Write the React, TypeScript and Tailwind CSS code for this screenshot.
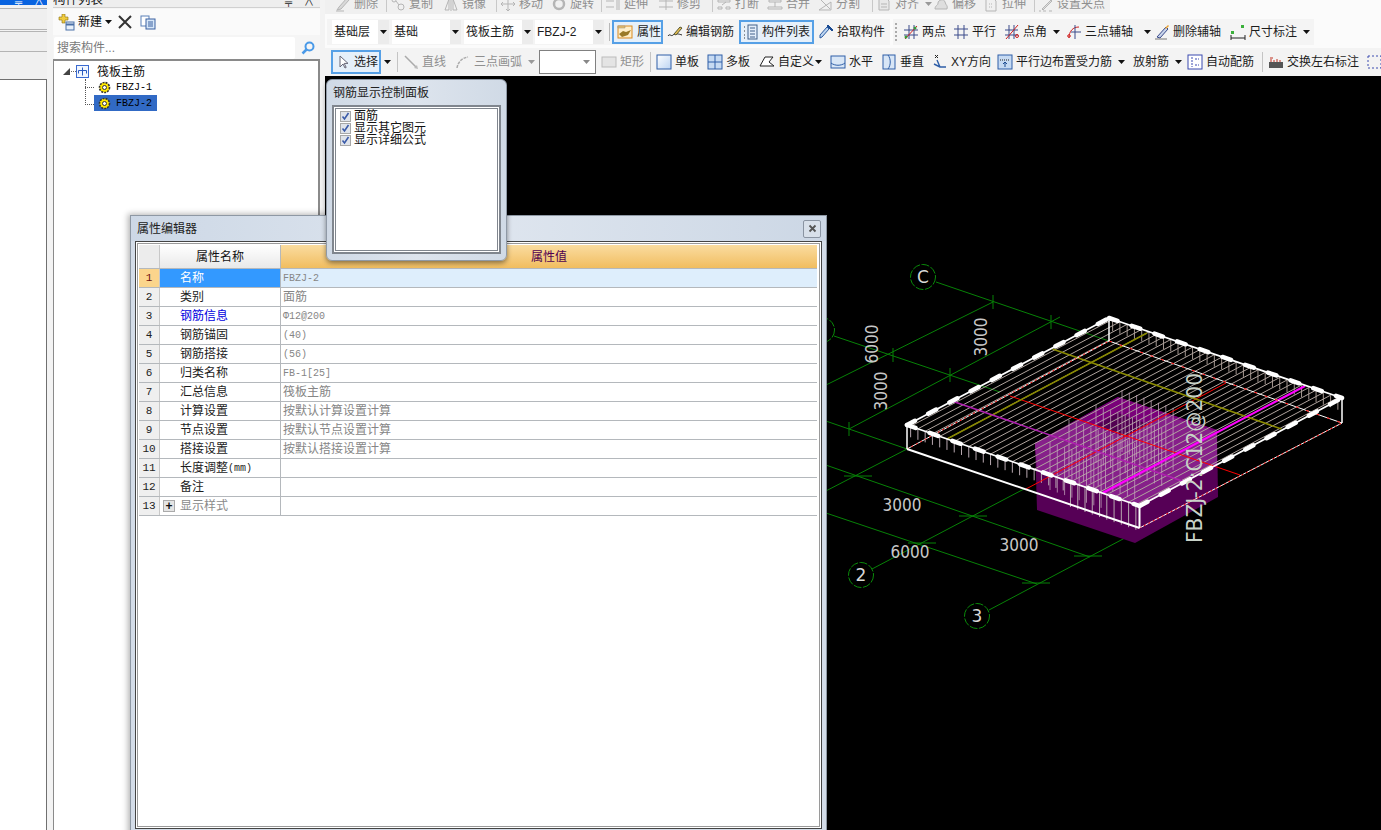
import React from "react";

const I = ({ children, s = 16 }: { children?: React.ReactNode; s?: number }) => (
  <svg width={s} height={s} viewBox="0 0 16 16" fill="none" className="shrink-0">{children}</svg>
);
const Arrow = ({ c = "#111" }: { c?: string }) => (
  <svg width="7" height="4" viewBox="0 0 7 4" className="shrink-0"><path d="M0 0h7L3.5 4z" fill={c} /></svg>
);
const G = "#b5b5b5";
const icons: Record<string, React.ReactNode> = {
  del: <><path d="M2 14l4-1 8-9-2-2-8 9z" fill="#d8d8d8" stroke={G} /><path d="M1 15h8" stroke={G} /></>,
  copy: <><circle cx="4" cy="4" r="2" stroke={G} /><circle cx="11" cy="11" r="3" stroke={G} /><path d="M6 5l3 4" stroke={G} /></>,
  mirror: <><path d="M2 14L6 3v11zM14 14L10 3v11z" stroke={G} /><path d="M8 1v14" stroke={G} /></>,
  move: <path d="M8 1v14M1 8h14M8 1l-2 2M8 1l2 2M8 15l-2-2M8 15l2-2M1 8l2-2M1 8l2 2M15 8l-2-2M15 8l-2 2" stroke={G} />,
  rotate: <><circle cx="8" cy="8" r="5" stroke={G} strokeWidth="2.5" /></>,
  extend: <path d="M1 5h8M1 11h8M12 2v12M14 2v12" stroke={G} />,
  trim: <path d="M1 5h14M1 11h14M8 2v12" stroke={G} />,
  brk: <path d="M2 4h12v2H2zM2 11h4v2H2zM10 11h4v2h-4zM6 9l4-3" stroke={G} />,
  merge: <path d="M2 4h12v2H2zM1 11h14v2H1zM8 6v5" stroke={G} />,
  split: <path d="M2 14h12V6L2 14zM4 4l9 9" stroke={G} />,
  align: <><path d="M3 2h7l3 3v9H3z" fill="#e8e8e8" stroke={G} /><path d="M5 8h6M5 11h6" stroke={G} /></>,
  offset: <path d="M2 13c0-4 3-3 3-6s6-5 7-1 3 3 2 7z" fill="#dedede" stroke={G} />,
  stretch: <><path d="M3 2h7l3 3v10H3z" stroke={G} /><path d="M6 8h4M6 11h4" stroke={G} strokeDasharray="1 1" /></>,
  grip: <><path d="M4 13L13 4l1 1-9 9z" fill="#ddd" stroke={G} /><path d="M1 15h2M5 15h3M11 15h3" stroke={G} /></>,
  prop: <><rect x="1" y="2" width="14" height="12" fill="#ffeec8" stroke="#d98a20" /><path d="M1 2h7v2H1z" fill="#f0c060" stroke="#888" strokeWidth=".5" /><path d="M2 10l4-3 3 1 5-2-3 5-6 2z" fill="#9a7a28" /></>,
  edit: <><path d="M1 12c2-3 3 1 5-1s6-1 9 0" stroke="#222" /><path d="M7 10l6-7 2 1-6 7z" fill="#e8c050" stroke="#553" /></>,
  list: <><path d="M1 3h2M1 7h2M1 11h2M1 14h2" stroke="#333" strokeDasharray="1 1" /><rect x="5" y="1" width="9" height="14" fill="#e4eefa" stroke="#40608a" /><path d="M7 4h5M7 7h5M7 10h5M7 13h5" stroke="#40608a" /></>,
  pick: <><path d="M2 14l2-1 7-8-2-2-7 8z" fill="#bcd4f0" stroke="#2a5aa0" /><path d="M9 2l1-1 5 5-1 1z" fill="#1a4a90" stroke="#1a4a90" /></>,
  two: <><path d="M1 6h14M1 11h14M6 1v14M11 1v14" stroke="#3a4a8a" /><path d="M2 15L14 2" stroke="#d02020" /><circle cx="3" cy="13" r="1.5" fill="#3a9a3a" /><circle cx="12" cy="4" r="1.5" fill="#3a9a3a" /></>,
  par: <path d="M1 5h14M1 11h14M5 1v14M11 1v14" stroke="#3a4a8a" />,
  angle: <><path d="M1 6h13M1 11h13M5 1v14M10 1v14" stroke="#3a4a8a" /><path d="M2 15L14 1" stroke="#d02020" /><circle cx="13" cy="12" r="1.5" stroke="#d02020" /></>,
  arc: <><path d="M3 14C3 7 7 3 13 3" stroke="#d02020" /><path d="M9 1v14M5 8h10" stroke="#3a4a8a" /><circle cx="3" cy="12" r="1.3" stroke="#d02020" /></>,
  eraser: <><path d="M3 13L12 3l2 2-8 9z" fill="#c8d4ea" stroke="#3a4a8a" /><path d="M1 15h12" stroke="#777" /><path d="M11 4l3-3 1 1-3 3z" fill="#e8a030" /></>,
  dim: <><path d="M1 14h14M1 11v5M15 11v5" stroke="#222" /><rect x="1" y="7" width="3" height="3" fill="#3ab03a" /><rect x="11" y="1" width="3" height="3" fill="#3ab03a" /></>,
  select: <path d="M4 2v11l3-3 2 4 1.2-.6-2-4H12z" fill="#fff" stroke="#667" />,
  line: <><path d="M2 2l11 11" stroke="#aaa" strokeWidth="1.5" /><path d="M15 15l-4-1 3-3z" fill="#bbb" /></>,
  arc3: <path d="M2 14C3 8 7 4 13 3" stroke="#aaa" strokeWidth="1.5" strokeDasharray="3 1" />,
  rect: <rect x="1" y="3" width="14" height="10" fill="#e4e4e4" stroke="#bbb" />,
  single: <rect x="1" y="1" width="14" height="14" fill="url(#bl)" stroke="#2f5fa8" />,
  multi: <><rect x="1" y="1" width="14" height="14" fill="#c6daf2" stroke="#2f5fa8" /><path d="M8 1v14M1 8h14" stroke="#2f5fa8" /></>,
  custom: <path d="M1 12L6 3h8l-4 5 5 4z" fill="#fff" stroke="#222" />,
  horiz: <><rect x="1" y="2" width="14" height="12" fill="#d8e6f6" stroke="#2f5fa8" /><path d="M1 9c4 3 10 3 14 0" stroke="#2f5fa8" /></>,
  vert: <><rect x="2" y="1" width="12" height="14" fill="#d8e6f6" stroke="#2f5fa8" /><path d="M7 1c3 4 3 10 0 14" stroke="#2f5fa8" /></>,
  xy: <><path d="M3 1l3 3M6 1L3 4" stroke="#222" /><path d="M5 6l3 7h6M8 13L2 10" stroke="#2f5fa8" strokeWidth="1.4" /></>,
  parbar: <><rect x="1" y="1" width="14" height="14" fill="#c6daf2" stroke="#2f5fa8" /><path d="M3 6h10" stroke="#222" strokeDasharray="1 1" /><path d="M8 13V8M6 10l2-2 2 2" stroke="#1a4a90" /></>,
  auto: <><rect x="1" y="1" width="14" height="14" fill="#fff" stroke="#3a4ab0" /><path d="M5 3v10M8 5h4M8 11h4" stroke="#3a4ab0" strokeDasharray="2 1" /></>,
  swap: <><rect x="1" y="8" width="14" height="6" fill="#555" /><path d="M3 8V5M6 8V6M9 8V5M12 8V6" stroke="#c03020" /><path d="M2 4h3" stroke="#c03020" /></>,
  dashbox: <rect x="1" y="2" width="13" height="12" stroke="#3a4ab0" strokeDasharray="2 2" />,
};

type It = { w: string; i?: string; t?: string; a?: boolean; gray?: boolean; ag?: string };
const Item = ({ w, i, t, a, gray, ag }: It) => (
  <div className={`flex items-center shrink-0 gap-[3px] h-[24px] ${w}`}>
    {i && <I>{icons[i]}</I>}
    {t && <span className={`whitespace-nowrap ${gray ? "text-[#8f8f8f]" : "text-[#1c1c1c]"}`}>{t}</span>}
    {a && <span className={ag ?? "ml-[3px]"}><Arrow c={gray ? "#999" : "#111"} /></span>}
  </div>
);
const Sep = ({ w }: { w: string }) => (
  <div className={`shrink-0 h-[20px] flex ${w}`}><div className="w-px h-full bg-[#c4c4c4]" /></div>
);

const row1: It[] = [
  { w: "w-[55px]", i: "del", t: "删除" }, { w: "w-[53px]", i: "copy", t: "复制" }, { w: "w-[57px]", i: "mirror", t: "镜像" },
  { w: "w-[51px]", i: "move", t: "移动" }, { w: "w-[54px]", i: "rotate", t: "旋转" }, { w: "w-[53px]", i: "extend", t: "延伸" },
  { w: "w-[58px]", i: "trim", t: "修剪" }, { w: "w-[51px]", i: "brk", t: "打断" }, { w: "w-[50px]", i: "merge", t: "合并" },
  { w: "w-[59px]", i: "split", t: "分割" }, { w: "w-[57px]", i: "align", t: "对齐", a: true }, { w: "w-[50px]", i: "offset", t: "偏移" },
  { w: "w-[55px]", i: "stretch", t: "拉伸" }, { w: "w-[76px]", i: "grip", t: "设置夹点" },
];
const row2b: It[] = [
  { w: "w-[50px]", i: "two", t: "两点" }, { w: "w-[51px]", i: "par", t: "平行" }, { w: "w-[62px]", i: "angle", t: "点角", a: true },
  { w: "w-[88px]", i: "arc", t: "三点辅轴", a: true, ag: "ml-[8px]" }, { w: "w-[76px]", i: "eraser", t: "删除辅轴" }, { w: "w-[86px]", i: "dim", t: "尺寸标注", a: true },
];
const row3: It[] = [
  { w: "w-[51px]", i: "single", t: "单板" }, { w: "w-[52px]", i: "multi", t: "多板" }, { w: "w-[71px]", i: "custom", t: "自定义", a: true, ag: "-ml-[2px]" },
  { w: "w-[51px]", i: "horiz", t: "水平" }, { w: "w-[51px]", i: "vert", t: "垂直" }, { w: "w-[65px]", i: "xy", t: "XY方向" },
  { w: "w-[136px]", i: "parbar", t: "平行边布置受力筋", a: true }, { w: "w-[54px]", t: "放射筋", a: true }, { w: "w-[75px]", i: "auto", t: "自动配筋" },
];

const Combo = ({ t, w, mr }: { t: string; w: string; mr: string }) => (
  <div className={`flex h-[24px] shrink-0 ${mr}`}>
    <div className={`bg-white pl-[2px] flex items-center ${w}`}>{t}</div>
    <div className="w-[11px] bg-[#ececec] flex items-center justify-center"><Arrow /></div>
  </div>
);

const rows: [string, string, string?, boolean?][] = [
  ["1", "名称", "FBZJ-2", true], ["2", "类别", "面筋"], ["3", "钢筋信息", "Φ12@200", true], ["4", "钢筋锚固", "(40)", true],
  ["5", "钢筋搭接", "(56)", true], ["6", "归类名称", "FB-1[25]", true], ["7", "汇总信息", "筏板主筋"], ["8", "计算设置", "按默认计算设置计算"],
  ["9", "节点设置", "按默认节点设置计算"], ["10", "搭接设置", "按默认搭接设置计算"], ["11", "长度调整", ""], ["12", "备注", ""], ["13", "显示样式", ""],
];

const Check = ({ t }: { t: string }) => (
  <div className="flex items-center h-[12px] gap-[3px]">
    <div className="w-[11px] h-[11px] shrink-0 border border-[#a8a8a8] bg-[#dfe3ea] flex items-center justify-center">
      <svg width="9" height="9" viewBox="0 0 9 9" fill="none"><path d="M1.5 4.5l2 2.5 4-6" stroke="#3a5aa8" strokeWidth="1.6" /></svg>
    </div>
    <span className="text-[#111] whitespace-nowrap leading-[12px]">{t}</span>
  </div>
);

const Gear = () => (
  <svg width="13" height="13" viewBox="0 0 13 13" className="shrink-0">
    <circle cx="6.5" cy="6.5" r="5" fill="#ffe800" stroke="#333" strokeDasharray="2 1" strokeWidth="1.6" />
    <circle cx="6.5" cy="6.5" r="2" fill="#fff" stroke="#333" />
  </svg>
);

const L = { x: 907, y: 425 }, B = { x: 1109, y: 318 }, R = { x: 1342, y: 398 }, F = { x: 1139.5, y: 506 };
const LB = { x: 907, y: 449 }, BB = { x: 1109, y: 341 }, RB = { x: 1342, y: 423 }, FB = { x: 1139.5, y: 528 };
type P = { x: number; y: number };
const Ln = ({ a, b, c, w = 1, d, cap }: { a: P; b: P; c: string; w?: number; d?: string; cap?: "round" }) => (
  <line x1={a.x} y1={a.y} x2={b.x} y2={b.y} stroke={c} strokeWidth={w} strokeDasharray={d} strokeLinecap={cap} />
);
const GL: [number, number, number, number][] = [
  [936, 282, 1109, 341], [834, 336, 1000, 392], [820, 419, 907, 449], [820, 463, 1090, 557], [820, 511, 1037, 584],
  [989, 610, 1140, 530], [872, 569, 1024, 489], [820, 494, 907, 449], [820, 388, 993, 302], [849, 429, 1060, 317],
];
const TK: [number, number][] = [[993, 302], [1051, 322], [893, 355], [950, 375], [849, 429], [858, 476], [973, 516], [1088, 556], [922, 543], [1036, 583]];
const Axis = ({ x, y, t }: { x: number; y: number; t: string }) => (
  <g>
    <circle cx={x} cy={y} r="12.5" fill="#000" stroke="#0a8a0a" strokeDasharray="8 1.5" />
    <text x={x} y={y + 6} textAnchor="middle" fontSize="17" fill="#d8d8d8" fontFamily="DejaVu Sans">{t}</text>
  </g>
);
const Num = ({ x, y, t, rot }: { x: number; y: number; t: string; rot?: boolean }) => (
  <text x={x} y={y} textAnchor="middle" fontSize="17" fill="#c8c8c8" fontFamily="DejaVu Sans" textLength={39} lengthAdjust="spacingAndGlyphs"
    transform={rot ? `rotate(-90 ${x} ${y})` : undefined}>{t}</text>
);

const Scene = () => {
  const N = 32;
  const mesh = Array.from({ length: N }, (_, i) => {
    const t = (i + 0.5) / N;
    const a = { x: L.x + (F.x - L.x) * t, y: L.y + (F.y - L.y) * t };
    const b = { x: a.x + (B.x - L.x), y: a.y + (B.y - L.y) };
    return { a, b };
  });
  const rowsV: [number, number, number, number][] = [
    [1122, 390, 8, 62], [1096, 405, 10, 58], [1069, 420, 10, 56], [1050, 442, 8, 48],
  ];
  return (
    <svg width="1056" height="754" viewBox="325 76 1056 754" className="block">
      <defs>
        <linearGradient id="bl" x1="0" y1="0" x2="1" y2="1"><stop offset="0" stopColor="#ffffff" /><stop offset="1" stopColor="#bcd4f2" /></linearGradient>
      </defs>
      {GL.map((g, i) => <line key={i} x1={g[0]} y1={g[1]} x2={g[2]} y2={g[3]} stroke="#078207" />)}
      {TK.map((k, i) => (
        <g key={i} stroke="#078207">
          <line x1={k[0] - 14} y1={k[1]} x2={k[0] + 14} y2={k[1]} opacity={i > 4 ? 1 : 0} />
          <line x1={k[0]} y1={k[1] - 7} x2={k[0]} y2={k[1] + 7} opacity={i <= 4 ? 1 : 0} />
        </g>
      ))}
      <Axis x={923} y={277} t="C" />
      <Axis x={861} y={575} t="2" />
      <Axis x={977} y={616} t="3" />
      <Axis x={822} y={330} t="" />
      <Num x={987} y={337} t="3000" rot />
      <Num x={878} y={344} t="6000" rot />
      <Num x={887} y={391} t="3000" rot />
      <Num x={902} y={511} t="3000" />
      <Num x={910} y={558} t="6000" />
      <Num x={1019} y={551} t="3000" />

      <polygon points="1035,443 1118,397 1217,430 1218,497 1135,543 1037,510" fill="#560056" />
      <polygon points="1035,443 1118,397 1217,430 1217,465 1139.5,506 1037,470" fill="#7a007a" />
      <polygon points="1035,443 1078,420 1125,437 1165,415 1217,432 1217,465 1139.5,506 1037,470" fill="#86208a" />
      <polygon points="1118,413 1097,425 1125,437 1148,424" fill="#520052" />

      {mesh.map((m, i) => (
        <g key={i}>
          <Ln a={m.a} b={m.b} c="#b0a49e" />
          <Ln a={m.b} b={{ x: m.b.x, y: m.b.y + 12 }} c="#a3968f" />
          <Ln a={m.a} b={{ x: m.a.x, y: m.a.y + 11 + (i > 21 && i < 32 ? 14 : 0) }} c="#b8a8b0" />
        </g>
      ))}
      {rowsV.map((r, ri) =>
        Array.from({ length: r[2] }, (_, i) => (
          <line key={`${ri}-${i}`} x1={r[0] + i * 7.3} y1={r[1] + i * 2.55} x2={r[0] + i * 7.3} y2={r[1] + i * 2.55 + r[3]} stroke="#c4a4bc" opacity="0.75" />
        ))
      )}

      <Ln a={{ x: 1010, y: 396 }} b={{ x: 1240, y: 475 }} c="#ff0000" />
      <Ln a={{ x: 1226, y: 383 }} b={{ x: 1026, y: 489 }} c="#ff0000" />
      <Ln a={{ x: 1052.5, y: 349 }} b={{ x: 1281.5, y: 429 }} c="#8a8a00" w={1.6} />
      <Ln a={{ x: 1147, y: 333 }} b={{ x: 947, y: 439 }} c="#8a8a00" w={1.6} />
      <Ln a={{ x: 952, y: 401 }} b={{ x: 1185, y: 482 }} c="#b020b0" w={1.6} />
      <Ln a={{ x: 1305, y: 386 }} b={{ x: 1102.6, y: 493 }} c="#ff00ff" w={2} />

      <Ln a={LB} b={BB} c="#ffffff" />
      <Ln a={LB} b={BB} c="#ff0000" d="2 3" />
      <Ln a={BB} b={RB} c="#ffffff" />
      <Ln a={BB} b={RB} c="#ff0000" d="3 8" />
      <Ln a={FB} b={RB} c="#ffffff" />
      <Ln a={FB} b={RB} c="#ff0000" d="2 3" />
      <Ln a={LB} b={FB} c="#ffffff" w={2} />
      <Ln a={L} b={LB} c="#ffffff" w={1.5} />
      <Ln a={F} b={FB} c="#ffffff" w={2} />
      <Ln a={R} b={RB} c="#ffffff" w={1.5} />
      <Ln a={B} b={BB} c="#ffffff" w={1.5} />
      {[[L, B], [B, R], [F, R], [L, F]].map((e, i) => (
        <g key={i}>
          <Ln a={e[0]} b={e[1]} c="#ffffff" w={1.8} />
          <Ln a={e[0]} b={e[1]} c="#ffffff" w={4.5} d="9 15" cap="round" />
        </g>
      ))}
      <text x={1202} y={543} fontSize="22" fill="#c8d2c8" fontFamily="DejaVu Sans" textLength={170} lengthAdjust="spacingAndGlyphs" transform="rotate(-90 1202 543)">FBZJ-2:C12@200</text>
    </svg>
  );
};

export default function App() {
  return (
    <div className="relative w-[1381px] h-[830px] overflow-hidden flex bg-[#f3f3f3] text-[12px] text-[#1c1c1c] font-['Liberation_Sans','Noto_Sans_CJK_SC',sans-serif]">
      {/* far left docked panel */}
      <div className="w-[47px] shrink-0 flex flex-col">
        <div className="h-[5px] bg-[#0a64e0] flex justify-end items-end gap-[12px] pr-[3px] overflow-hidden">
          <span className="text-white text-[10px] leading-[5px]">╤</span>
          <span className="text-white text-[10px] leading-[5px]">∧</span>
        </div>
        <div className="h-[3px]" />
        <div className="h-[22px] bg-[#efefef] border-y border-[#b4b4b4]" />
        <div className="h-px" />
        <div className="h-[21px] bg-[#efefef] border-y border-[#b4b4b4]" />
        <div className="h-[27px] bg-[#f0f0f0]" />
        <div className="flex-1 bg-white border-t border-r border-[#707070]" />
      </div>
      <div className="w-[6px] shrink-0" />
      {/* component list */}
      <div className="w-[267px] shrink-0 flex flex-col bg-[#f5f5f5]">
        <div className="h-[8px] overflow-hidden bg-[#eeeeee] flex justify-between pr-[6px] border-b border-[#d0d0d0]">
          <span className="-mt-[8px] leading-[16px] text-[12.5px] text-[#222]">构件列表</span>
          <span className="flex gap-[12px] text-[#222] text-[10px] leading-[6px]"><span>╤</span><span>∧</span></span>
        </div>
        <div className="h-[26px] flex items-center pl-[5px] bg-[#fafafa] mt-[1px]">
          <svg width="17" height="17" viewBox="0 0 17 17" className="shrink-0 mr-[3px]">
            <path d="M4 0h3v3h3v3H7v3H4V6H1V3h3z" fill="#f0cc40" stroke="#8a7010" strokeWidth=".6" />
            <rect x="8" y="8" width="8" height="8" fill="#e8f0fa" stroke="#4a70a8" />
            <path d="M8 10.5h8" stroke="#4a70a8" strokeWidth="2" />
          </svg>
          <span className="text-[#111]">新建</span>
          <span className="ml-[3px] mr-[6px]"><Arrow /></span>
          <svg width="14" height="14" viewBox="0 0 14 14" className="shrink-0 mr-[8px]"><path d="M1 1l12 12M13 1L1 13" stroke="#333" strokeWidth="2" /></svg>
          <svg width="16" height="15" viewBox="0 0 16 15" fill="none" className="shrink-0">
            <rect x="1" y="1" width="8" height="10" fill="#fff" stroke="#5a80b8" />
            <rect x="6" y="4" width="9" height="10" fill="#d6e6f8" stroke="#3a60a0" />
            <path d="M8 7h5M8 9h5M8 11h5" stroke="#3a60a0" />
          </svg>
        </div>
        <div className="h-[24px] flex items-stretch gap-[2px] pl-px pr-[2px] pt-[2px]">
          <div className="flex-1 bg-white pl-[3px] flex items-center text-[#7a7a7a] rounded-[2px]">搜索构件...</div>
          <div className="w-[21px] flex items-center justify-center">
            <svg width="14" height="14" viewBox="0 0 14 14" fill="none"><circle cx="8.5" cy="5.5" r="4" stroke="#4a9ae8" strokeWidth="2" /><path d="M5.5 8.5L1.5 12.5" stroke="#4a9ae8" strokeWidth="2.5" /></svg>
          </div>
        </div>
        <div className="flex-1 bg-white border-t-2 border-l border-r-2 border-[#8a8a8a] relative">
          <div className="flex items-center h-[16px] mt-[2px] pl-[9px]">
            <svg width="7" height="7" viewBox="0 0 7 7" className="shrink-0"><path d="M7 0v7H0z" fill="#444" /></svg>
            <span className="w-[5px] ml-[1px] border-t border-dotted border-[#666]" />
            <svg width="13" height="13" viewBox="0 0 13 13" fill="none" className="shrink-0">
              <rect x=".5" y=".5" width="12" height="12" fill="#f0f6fe" stroke="#3a6ad0" />
              <path d="M6.5 2.5v8M2.5 5.5h8M2.5 5.5v3M10.5 5.5v3" stroke="#2a5ac0" />
            </svg>
            <span className="ml-[8px] text-[#111] text-[12px] font-['Noto_Sans_CJK_SC',sans-serif]">筏板主筋</span>
          </div>
          <div className="absolute left-[31px] top-[18px] w-[9px] h-[26px] border-l border-b border-dotted border-[#555]" />
          <div className="absolute left-[31px] top-[18px] w-[9px] h-[9px] border-b border-dotted border-[#555]" />
          <div className="flex items-center h-[16px] pl-[44px]">
            <Gear />
            <span className="ml-[5px] font-['Liberation_Mono',monospace] text-[10px] text-black">FBZJ-1</span>
          </div>
          <div className="flex items-center h-[16px] ml-[40px] pl-[4px] w-[63px] bg-[#316ac5]">
            <Gear />
            <span className="ml-[5px] font-['Liberation_Mono',monospace] text-[10px] text-black">FBZJ-2</span>
          </div>
        </div>
      </div>
      <div className="w-[5px] shrink-0" />
      {/* main */}
      <div className="flex-1 min-w-0 flex flex-col bg-[#fbfbfb]">
        <div className="h-[14px] overflow-hidden w-[785px] bg-[#f0f0f0] flex items-center pl-[10px] shrink-0">
          <div className="flex items-center -mt-[7px] shrink-0">
            {row1.map((it, i) => (
              <React.Fragment key={i}>
                <Item {...it} gray />
                {[0, 2, 4, 6, 9, 12].includes(i) && <div className="w-px h-[16px] bg-[#c8c8c8] -ml-[4px] mr-[3px]" />}
              </React.Fragment>
            ))}
          </div>
        </div>
        <div className="h-[5px] shrink-0" />
        <div className="h-[26px] flex shrink-0 pl-[2px] gap-[3px]">
          <div className="w-[563px] bg-[#f4f4f4] flex items-center pl-[5px]">
            <Combo t="基础层" w="w-[46px]" mr="mr-[3px]" />
            <Combo t="基础" w="w-[58px]" mr="mr-[3px]" />
            <Combo t="筏板主筋" w="w-[58px]" mr="mr-[2px]" />
            <Combo t="FBZJ-2" w="w-[58px]" mr="mr-[5px]" />
            <div className="w-px h-[18px] bg-[#b8b8b8] mr-[2px]" />
            <div className="w-[51px] h-[24px] shrink-0 border-2 border-[#56a0e6] bg-[#e6f0fa] flex items-center gap-[4px] pl-[3px] mr-[4px]">
              <I>{icons.prop}</I><span>属性</span>
            </div>
            <Item w="w-[72px]" i="edit" t="编辑钢筋" />
            <div className="w-[75px] h-[24px] shrink-0 border-2 border-[#56a0e6] bg-[#e6f0fa] flex items-center gap-[3px] pl-[2px] mr-[4px]">
              <I>{icons.list}</I><span>构件列表</span>
            </div>
            <Item w="w-[70px]" i="pick" t="拾取构件" />
          </div>
          <div className="w-[421px] bg-[#f4f4f4] flex items-center pl-[2px]">
            <div className="w-[8px] h-[18px] border-l-2 border-dotted border-[#aaa] shrink-0" />
            {row2b.map((it, i) => <Item key={i} {...it} />)}
          </div>
        </div>
        <div className="h-[3px] shrink-0" />
        <div className="h-[28px] bg-[#f3f3f3] flex items-center pl-[6px] shrink-0">
          <div className="w-[50px] h-[24px] border-2 border-[#56a0e6] bg-[#e6f0fa] flex items-center gap-[2px] pl-[3px] shrink-0">
            <I>{icons.select}</I><span>选择</span>
          </div>
          <div className="w-[12px] h-[24px] flex items-center justify-center shrink-0 mr-[4px]"><Arrow /></div>
          <Sep w="w-[6px]" />
          <Item w="w-[52px]" i="line" t="直线" gray />
          <Item w="w-[84px]" i="arc3" t="三点画弧" a gray />
          <div className="w-[57px] h-[24px] bg-white border border-[#808080] flex items-center justify-end pr-[5px] shrink-0 mr-[5px]"><Arrow c="#888" /></div>
          <Item w="w-[49px]" i="rect" t="矩形" gray />
          <Sep w="w-[6px]" />
          {row3.map((it, i) => <Item key={i} {...it} />)}
          <Sep w="w-[6px]" />
          <Item w="w-[99px]" i="swap" t="交换左右标注" />
          <Item w="w-[16px]" i="dashbox" />
        </div>
        <div className="flex-1 min-h-0 bg-black overflow-hidden"><Scene /></div>
      </div>

      {/* property editor window */}
      <div className="absolute left-[130px] top-[215px] w-[697px] h-[625px] bg-[#d3dce8] border border-[#8e98a4] shadow-[-2px_-1px_6px_rgba(0,0,0,0.3)] flex flex-col">
        <div className="h-[25px] shrink-0 flex items-center justify-between pl-[6px] pr-[5px] bg-gradient-to-r from-[#cdd8e6] via-[#dfe6ef] to-[#ccd7e5]">
          <span className="text-[#222] mt-[1px]">属性编辑器</span>
          <div className="w-[18px] h-[18px] border border-[#8a94a2] rounded-[2px] bg-[#d8e0ea] flex items-center justify-center">
            <svg width="9" height="9" viewBox="0 0 9 9"><path d="M1.5 1.5l6 6M7.5 1.5l-6 6" stroke="#555" strokeWidth="1.8" /></svg>
          </div>
        </div>
        <div className="flex-1 mx-[4px] mb-[10px] border border-[#444] bg-white p-px">
          <div className="h-full border border-[#9a9a9a] bg-white pl-px pr-[2px] pt-px">
            <div className="flex h-[24px] border-b border-[#b4b8bc]">
              <div className="w-[21px] shrink-0 bg-[#ececec] border-r border-[#c8c8c8]" />
              <div className="w-[121px] shrink-0 bg-gradient-to-b from-white to-[#e9e9e9] border-r border-[#b4b8bc] flex items-center justify-center text-[#111]">属性名称</div>
              <div className="flex-1 bg-gradient-to-b from-[#fadc9f] to-[#f1bd5e] flex items-center justify-center text-[#500050]">属性值</div>
            </div>
            {rows.map(([n, name, val, mono]) => (
              <div key={n} className="flex h-[19px] border-b border-[#b4b8bc]">
                <div className={`w-[21px] shrink-0 border-r border-[#c8c8c8] flex items-center justify-center font-['Liberation_Mono',monospace] text-[11px] ${n === "1" ? "bg-[#fbd58c] text-[#701010]" : "bg-[#efefef] text-[#222]"}`}>{n}</div>
                <div className={`w-[121px] shrink-0 border-r border-[#b4b8bc] flex items-center relative pl-[20px] ${n === "1" ? "bg-[#3399ff] text-white" : n === "3" ? "text-[#0000e0]" : n === "13" ? "text-[#8a8a8a]" : "text-[#1c1c1c]"}`}>
                  {n === "13" && (
                    <span className="absolute left-[3px] top-[3px] w-[12px] h-[12px] bg-[#e4e4e4] border border-[#aaa] flex items-center justify-center text-[#111] text-[12px] leading-none font-bold">+</span>
                  )}
                  <span className="whitespace-nowrap">{name}</span>
                  {n === "11" && <span className="font-['Liberation_Mono',monospace] text-[10px] whitespace-nowrap">(mm)</span>}
                </div>
                <div className={`flex-1 flex items-center pl-[2px] text-[#868686] ${n === "1" ? "bg-[#deeefc]" : ""} ${mono ? "font-['Liberation_Mono','Noto_Sans_CJK_SC',monospace] text-[10px]" : ""}`}>{val}</div>
              </div>
            ))}
          </div>
        </div>
      </div>

      {/* rebar display panel */}
      <div className="absolute left-[326px] top-[79px] w-[181px] h-[182px] rounded-[6px] bg-gradient-to-r from-[#d0dae6] via-[#dde4ed] to-[#d0dae6] border border-[#8f99a6] shadow-[0_2px_5px_rgba(0,0,0,0.45)] flex flex-col px-[5px] pb-[6px]">
        <div className="h-[25px] shrink-0 flex items-center pl-px text-[#222]">钢筋显示控制面板</div>
        <div className="flex-1 border-2 border-[#80868e] bg-white p-px">
          <div className="h-full border border-[#80868e] bg-white pl-[4px] pt-px">
            <Check t="面筋" />
            <Check t="显示其它图元" />
            <Check t="显示详细公式" />
          </div>
        </div>
      </div>
    </div>
  );
}
